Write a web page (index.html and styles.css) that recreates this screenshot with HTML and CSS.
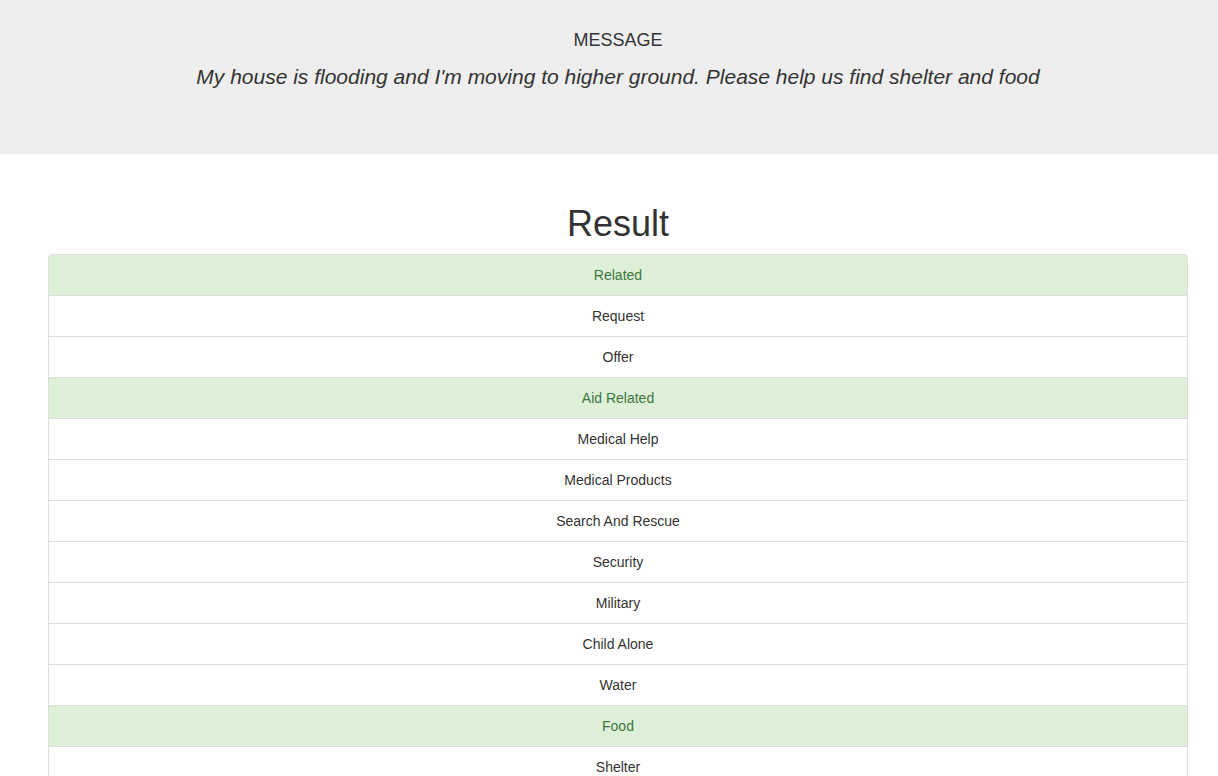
FILE: index.html
```html
<!DOCTYPE html>
<html>
<head>
<meta charset="utf-8">
<link rel="stylesheet" href="styles.css">
</head>
<body>
<div class="jumbotron">
  <div class="container">
    <div class="label">MESSAGE</div>
    <p class="message">My house is flooding and I'm moving to higher ground. Please help us find shelter and food</p>
  </div>
</div>
<div class="container main">
  <h1 class="title">Result</h1>
  <ul class="list-group">
    <li class="item success">Related</li>
    <li class="item">Request</li>
    <li class="item">Offer</li>
    <li class="item success">Aid Related</li>
    <li class="item">Medical Help</li>
    <li class="item">Medical Products</li>
    <li class="item">Search And Rescue</li>
    <li class="item">Security</li>
    <li class="item">Military</li>
    <li class="item">Child Alone</li>
    <li class="item">Water</li>
    <li class="item success">Food</li>
    <li class="item">Shelter</li>
    <li class="item">Clothing</li>
    <li class="item">Money</li>
  </ul>
</div>
</body>
</html>
```

FILE: styles.css
```css
html, body {
  margin: 0;
  padding: 0;
  overflow: hidden;
}
body {
  font-family: "Liberation Sans", Arial, Helvetica, sans-serif;
  font-size: 14px;
  line-height: 20px;
  color: #333;
  background: #fff;
}
.jumbotron {
  background: #eee;
  height: 154px;
  box-sizing: border-box;
  padding-top: 30px;
  margin-bottom: 30px;
}
.container {
  width: 1140px;
  margin-left: 48px;
}
.main {
  display: flow-root;
}
.label {
  text-align: center;
  font-size: 18px;
  line-height: 20px;
  color: #333;
}
.message {
  margin: 12px 0 0;
  text-align: center;
  font-style: italic;
  font-size: 21px;
  line-height: 30px;
}
.title {
  margin: 20px 0 10px;
  text-align: center;
  font-size: 36px;
  font-weight: 500;
  line-height: 40px;
  color: #333;
}
.list-group {
  list-style: none;
  margin: 0;
  padding: 0;
}
.item {
  padding: 10px 15px;
  border: 1px solid #ddd;
  margin-bottom: -1px;
  text-align: center;
  background: #fff;
}
.item:first-child {
  border-top-left-radius: 4px;
  border-top-right-radius: 4px;
}
.item.success {
  background: #dff0d8;
  color: #3c763d;
}
```
